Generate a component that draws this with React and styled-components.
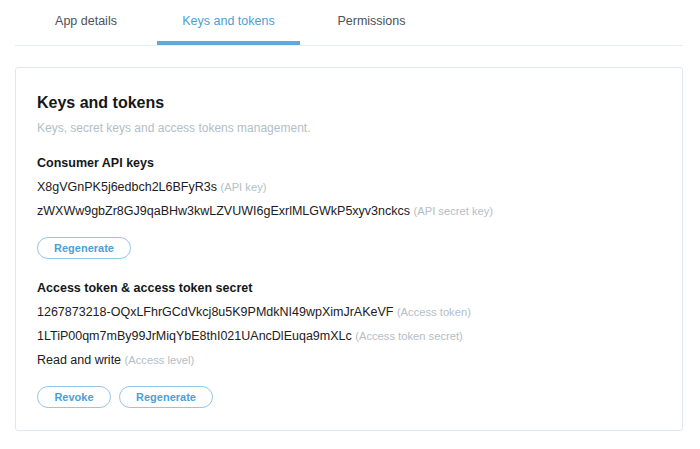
import React from 'react';
import styled, {createGlobalStyle} from 'styled-components';

const GlobalStyle = createGlobalStyle`
    html, body {
        margin: 0;
        padding: 0;
        background: #ffffff;
        font-family: "Liberation Sans", Arial, sans-serif;
        color: #1c2022;
    }
`;

const Page = styled.div`
    width: 700px;
    height: 449px;
    padding: 0 17px 0 15px;
    box-sizing: border-box;
    overflow: hidden;
`;

const TabBar = styled.div`
    display: flex;
    height: 45px;
    border-bottom: 1px solid #e6ecf0;
`;

const Tab = styled.div`
    position: relative;
    display: flex;
    align-items: center;
    justify-content: center;
    width: ${(props) => props.width}px;
    height: 100%;
    padding-top: 1px;
    box-sizing: border-box;
    font-size: 12.5px;
    color: ${(props) => (props.active ? '#4a9fd8' : '#4b5258')};
    border-bottom: 4px solid ${(props) => (props.active ? '#5ea9dd' : 'transparent')};

    & + &::before {
        content: '';
        position: absolute;
        left: 0;
        top: 14px;
        height: 16px;
        border-left: 1px solid #dfe6eb;
    }
`;

const Card = styled.div`
    margin-top: 21px;
    border: 1px solid #e1e8ed;
    border-radius: 3px;
    padding: 24px 21px 21px;
    height: 364px;
    box-sizing: border-box;
`;

const Title = styled.h2`
    margin: 0;
    font-size: 16px;
    font-weight: bold;
    line-height: 22px;
    color: #14171a;
`;

const Subtitle = styled.p`
    margin: 4px 0 0;
    font-size: 12px;
    line-height: 20px;
    color: #b3bec6;
`;

const Section = styled.section`
    margin-top: ${(props) => props.gap}px;
`;

const SectionTitle = styled.h3`
    margin: 0 0 2px;
    font-size: 12.5px;
    font-weight: bold;
    line-height: 20px;
    color: #14171a;
`;

const KeyLine = styled.div`
    font-size: 12.5px;
    line-height: 24px;
    color: #1c2022;
    white-space: nowrap;
`;

const Hint = styled.span`
    font-size: 11.2px;
    color: #b3bec6;
`;

const ButtonRow = styled.div`
    display: flex;
    gap: 8px;
    margin-top: 14px;
`;

const PillButton = styled.button`
    width: ${(props) => props.width}px;
    height: 22px;
    padding: 0;
    border: 1px solid #94c6e8;
    border-radius: 11px;
    background: #ffffff;
    color: #4a9fd8;
    font-family: "Liberation Sans", Arial, sans-serif;
    font-size: 11px;
    font-weight: bold;
    cursor: pointer;
`;

function App() {
    return (
        <Page>
            <GlobalStyle/>
            <TabBar>
                <Tab width={142}>App details</Tab>
                <Tab width={143} active>Keys and tokens</Tab>
                <Tab width={143}>Permissions</Tab>
            </TabBar>
            <Card>
                <Title>Keys and tokens</Title>
                <Subtitle>Keys, secret keys and access tokens management.</Subtitle>
                <Section gap={15}>
                    <SectionTitle>Consumer API keys</SectionTitle>
                    <KeyLine>X8gVGnPK5j6edbch2L6BFyR3s <Hint>(API key)</Hint></KeyLine>
                    <KeyLine>zWXWw9gbZr8GJ9qaBHw3kwLZVUWI6gExrlMLGWkP5xyv3nckcs <Hint>(API secret key)</Hint></KeyLine>
                    <ButtonRow>
                        <PillButton width={94}>Regenerate</PillButton>
                    </ButtonRow>
                </Section>
                <Section gap={19}>
                    <SectionTitle>Access token &amp; access token secret</SectionTitle>
                    <KeyLine>1267873218-OQxLFhrGCdVkcj8u5K9PMdkNI49wpXimJrAKeVF <Hint>(Access token)</Hint></KeyLine>
                    <KeyLine>1LTiP00qm7mBy99JrMiqYbE8thI021UAncDlEuqa9mXLc <Hint>(Access token secret)</Hint></KeyLine>
                    <KeyLine>Read and write <Hint>(Access level)</Hint></KeyLine>
                    <ButtonRow>
                        <PillButton width={74}>Revoke</PillButton>
                        <PillButton width={94}>Regenerate</PillButton>
                    </ButtonRow>
                </Section>
            </Card>
        </Page>
    );
}

export default App;
